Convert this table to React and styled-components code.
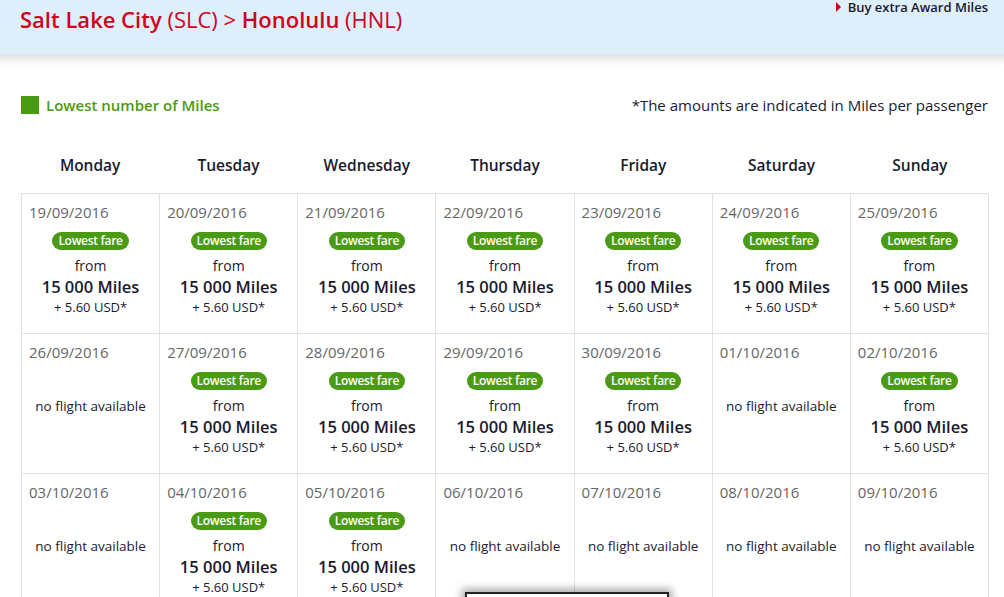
import React from 'react'
import styled, { createGlobalStyle } from 'styled-components'

const GlobalStyle = createGlobalStyle`
  html, body {
    margin: 0;
    padding: 0;
    background: #fff;
    font-family: "Open Sans", "Liberation Sans", Arial, sans-serif;
    overflow: hidden;
  }
`

const days = ['Monday', 'Tuesday', 'Wednesday', 'Thursday', 'Friday', 'Saturday', 'Sunday']

const rows = [
    [
        { date: '19/09/2016', fare: true },
        { date: '20/09/2016', fare: true },
        { date: '21/09/2016', fare: true },
        { date: '22/09/2016', fare: true },
        { date: '23/09/2016', fare: true },
        { date: '24/09/2016', fare: true },
        { date: '25/09/2016', fare: true },
    ],
    [
        { date: '26/09/2016', fare: false },
        { date: '27/09/2016', fare: true },
        { date: '28/09/2016', fare: true },
        { date: '29/09/2016', fare: true },
        { date: '30/09/2016', fare: true },
        { date: '01/10/2016', fare: false },
        { date: '02/10/2016', fare: true },
    ],
    [
        { date: '03/10/2016', fare: false },
        { date: '04/10/2016', fare: true },
        { date: '05/10/2016', fare: true },
        { date: '06/10/2016', fare: false },
        { date: '07/10/2016', fare: false },
        { date: '08/10/2016', fare: false },
        { date: '09/10/2016', fare: false },
    ],
]

const Cell = ({ date, fare }) => (
    <DayCell>
        <DateText>{date}</DateText>
        <Badge $hidden={!fare}>Lowest fare</Badge>
        {fare ? (
            <>
                <From>from</From>
                <Miles>15 000 Miles</Miles>
                <Tax>+ 5.60 USD*</Tax>
            </>
        ) : (
            <NoFlight>no flight available</NoFlight>
        )}
    </DayCell>
)

const App = () => {
    return (
        <Page>
            <GlobalStyle />
            <Header>
                <Title>
                    <b>Salt Lake City</b> (SLC) &gt; <b>Honolulu</b> (HNL)
                </Title>
                <BuyLink>
                    <Arrow />
                    Buy extra Award Miles
                </BuyLink>
            </Header>
            <HeaderShadow />
            <Content>
                <LegendRow>
                    <Legend>
                        <LegendSwatch />
                        Lowest number of Miles
                    </Legend>
                    <Note>*The amounts are indicated in Miles per passenger</Note>
                </LegendRow>
                <DayNames>
                    {days.map(d => <DayName key={d}>{d}</DayName>)}
                </DayNames>
                <Grid>
                    {rows.flat().map(c => <Cell key={c.date} {...c} />)}
                </Grid>
            </Content>
            <Popup />
        </Page>
    )
}

const Page = styled.div`
  position: relative;
  width: 1004px;
  height: 597px;
  overflow: hidden;
`

const Header = styled.div`
  height: 54px;
  background: #ddeffb;
  display: flex;
  justify-content: space-between;
  align-items: flex-start;
  padding: 0 16px 0 20px;
`

const HeaderShadow = styled.div`
  height: 12px;
  background: linear-gradient(#e2e2e2, #ffffff);
`

const Title = styled.h1`
  margin: 5px 0 0;
  font-size: 22px;
  line-height: 28px;
  font-weight: 400;
  color: #d0021b;

  b {
    font-weight: 600;
  }
`

const BuyLink = styled.a`
  display: flex;
  align-items: center;
  gap: 7px;
  margin-top: -1px;
  font-size: 13px;
  line-height: 16px;
  font-weight: 600;
  color: #1a1a2e;
`

const Arrow = styled.span`
  width: 0;
  height: 0;
  border-top: 5px solid transparent;
  border-bottom: 5px solid transparent;
  border-left: 5px solid #d0021b;
`

const Content = styled.div`
  padding: 0 15px 0 21px;
`

const LegendRow = styled.div`
  display: flex;
  justify-content: space-between;
  align-items: center;
  margin-top: 27px;
  height: 24px;
`

const Legend = styled.div`
  display: flex;
  align-items: center;
  gap: 7px;
  font-size: 15px;
  font-weight: 600;
  color: #4a9a14;
`

const LegendSwatch = styled.span`
  width: 18px;
  height: 18px;
  background: #4a9a14;
`

const Note = styled.div`
  font-size: 15px;
  color: #1a1a2e;
  margin-right: 1px;
`

const DayNames = styled.div`
  display: grid;
  grid-template-columns: repeat(7, 1fr);
  height: 76px;
  align-items: center;
  padding-top: 20px;
  box-sizing: border-box;
`

const DayName = styled.div`
  text-align: center;
  font-size: 15.5px;
  font-weight: 600;
  color: #1a1a2e;
`

const Grid = styled.div`
  display: grid;
  grid-template-columns: repeat(7, 1fr);
  border-top: 1px solid #e1e1e1;
  border-left: 1px solid #e1e1e1;
`

const DayCell = styled.div`
  height: 140px;
  box-sizing: border-box;
  border-right: 1px solid #e1e1e1;
  border-bottom: 1px solid #e1e1e1;
  display: flex;
  flex-direction: column;
  align-items: center;
  padding-top: 8px;
`

const DateText = styled.div`
  align-self: flex-start;
  padding-left: 7px;
  font-size: 15px;
  line-height: 20px;
  color: #666;
`

const Badge = styled.span`
  margin-top: 10px;
  height: 18px;
  line-height: 18px;
  padding: 0 6px;
  border-radius: 9px;
  background: #4a9a14;
  color: #fff;
  font-size: 12px;
  font-weight: 600;
  letter-spacing: -0.3px;
  visibility: ${p => (p.$hidden ? 'hidden' : 'visible')};
  display: inline-block;
`

const From = styled.div`
  margin-top: 6px;
  font-size: 14px;
  line-height: 20px;
  color: #1a1a2e;
`

const NoFlight = styled(From)`
  font-size: 13.5px;
`

const Miles = styled.div`
  font-size: 16.5px;
  line-height: 22px;
  font-weight: 600;
  color: #1a1a2e;
`

const Tax = styled.div`
  font-size: 13px;
  line-height: 18px;
  color: #1a1a2e;
`

const Popup = styled.div`
  position: absolute;
  left: 465px;
  top: 592px;
  width: 200px;
  height: 20px;
  background: #fff;
  border: 2px solid #222;
  box-shadow: 0 0 8px 3px rgba(0, 0, 0, 0.35);
`

export default App
